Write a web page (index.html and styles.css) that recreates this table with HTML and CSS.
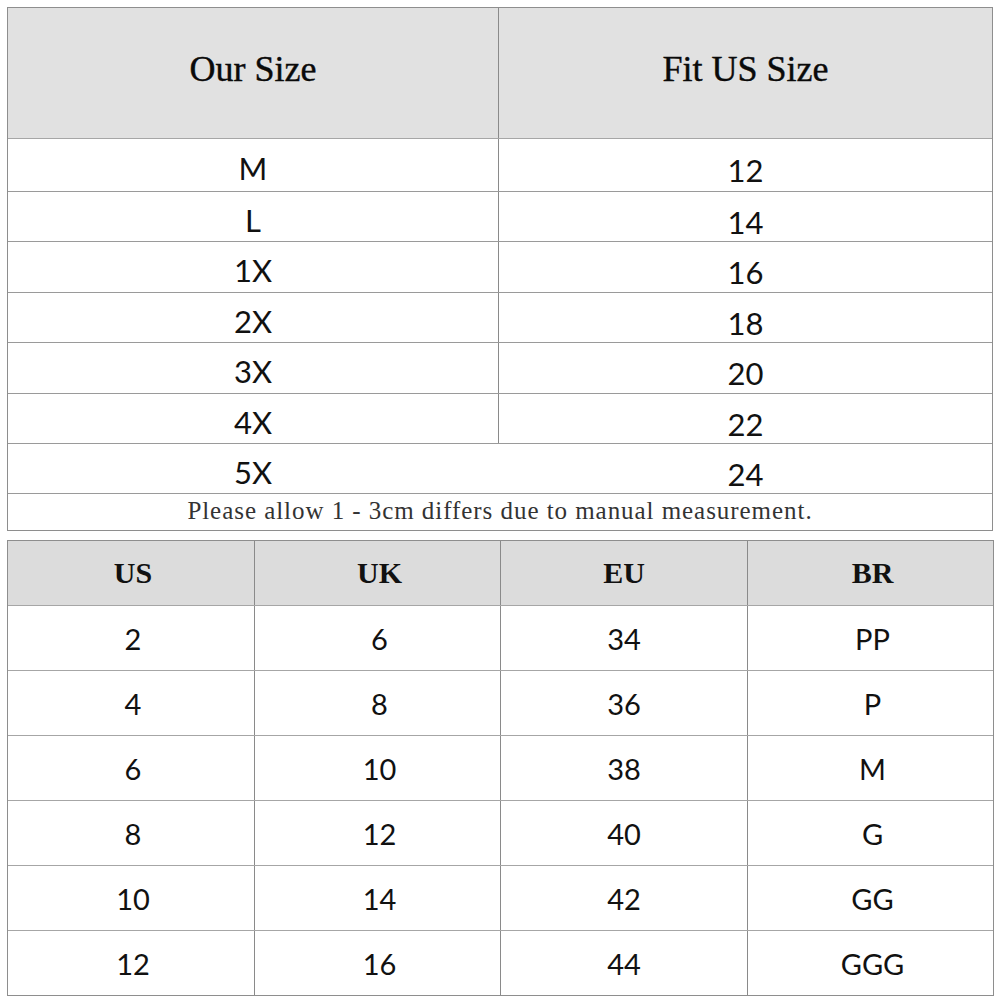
FILE: index.html
```html
<!DOCTYPE html>
<html>
<head>
<meta charset="utf-8">
<link rel="stylesheet" href="styles.css">
</head>
<body>
<div class="chart">
  <div class="fit-head">
    <div class="fh-cell">Our Size</div>
    <div class="fh-cell fh-right">Fit US Size</div>
  </div>
  <div class="fit-row r52"><div class="fc">M</div><div class="fc fc-r">12</div></div>
  <div class="fit-row r49"><div class="fc">L</div><div class="fc fc-r">14</div></div>
  <div class="fit-row r50"><div class="fc">1X</div><div class="fc fc-r">16</div></div>
  <div class="fit-row r49"><div class="fc">2X</div><div class="fc fc-r">18</div></div>
  <div class="fit-row r50"><div class="fc">3X</div><div class="fc fc-r">20</div></div>
  <div class="fit-row r49"><div class="fc">4X</div><div class="fc fc-r">22</div></div>
  <div class="fit-row r49 last"><div class="fc">5X</div><div class="fc fc-r nodiv">24</div></div>
  <div class="note">Please allow 1 - 3cm differs due to manual measurement.</div>
</div>

<div class="conv">
  <div class="cv-row cv-head">
    <div class="cv">US</div><div class="cv">UK</div><div class="cv cv-mid">EU</div><div class="cv">BR</div>
  </div>
  <div class="cv-row"><div class="cv">2</div><div class="cv">6</div><div class="cv cv-mid">34</div><div class="cv">PP</div></div>
  <div class="cv-row"><div class="cv">4</div><div class="cv">8</div><div class="cv cv-mid">36</div><div class="cv">P</div></div>
  <div class="cv-row"><div class="cv">6</div><div class="cv">10</div><div class="cv cv-mid">38</div><div class="cv">M</div></div>
  <div class="cv-row"><div class="cv">8</div><div class="cv">12</div><div class="cv cv-mid">40</div><div class="cv">G</div></div>
  <div class="cv-row"><div class="cv">10</div><div class="cv">14</div><div class="cv cv-mid">42</div><div class="cv">GG</div></div>
  <div class="cv-row cv-last"><div class="cv">12</div><div class="cv">16</div><div class="cv cv-mid">44</div><div class="cv">GGG</div></div>
</div>
</body>
</html>
```

FILE: styles.css
```css
html, body {
  margin: 0;
  padding: 0;
  background: #ffffff;
}
body {
  width: 1000px;
  height: 1000px;
  overflow: hidden;
  color: #111;
}
.chart {
  box-sizing: border-box;
  margin: 7px 0 0 7px;
  width: 986px;
  border: 1px solid #8e8e8e;
}
.fit-head {
  display: grid;
  grid-template-columns: 490px 494px;
  height: 131px;
  box-sizing: border-box;
  background: #e1e1e1;
  border-bottom: 1px solid #a6a6a6;
}
.fh-cell {
  display: flex;
  align-items: center;
  justify-content: center;
  padding-bottom: 8px;
  font-family: "Liberation Serif", "Times New Roman", serif;
  font-size: 36px;
  color: #0a0a0a;
  -webkit-text-stroke: 0.4px #0a0a0a;
}
.fh-right {
  border-left: 1px solid #8a8a8a;
}
.fit-row {
  display: grid;
  grid-template-columns: 490px 494px;
  box-sizing: border-box;
  border-bottom: 1px solid #9a9a9a;
}
.r52 { height: 53px; }
.r49 { height: 50px; }
.r50 { height: 51px; }
.fc {
  display: flex;
  align-items: center;
  justify-content: center;
  padding-top: 6px;
  font-family: "Lato", "DejaVu Sans", sans-serif;
  font-size: 31px;
  color: #111;
}
.fc-r {
  border-left: 1px solid #8a8a8a;
  padding-top: 10px;
}
.fc-r.nodiv {
  border-left-color: transparent;
}
.note {
  height: 36px;
  display: flex;
  align-items: center;
  justify-content: center;
  padding-bottom: 3px;
  box-sizing: border-box;
  font-family: "Liberation Serif", "Times New Roman", serif;
  font-size: 25px;
  letter-spacing: 0.95px;
  color: #333;
}
.conv {
  box-sizing: border-box;
  margin: 9px 0 0 7px;
  width: 987px;
  border: 1px solid #8e8e8e;
}
.cv-row {
  display: grid;
  grid-template-columns: 246px 246px 247px 246px;
  height: 65px;
  box-sizing: border-box;
  border-bottom: 1px solid #a6a6a6;
}
.cv-row.cv-last {
  height: 64px;
  border-bottom: none;
}
.cv-head {
  background: #dcdcdc;
}
.cv {
  display: flex;
  align-items: center;
  justify-content: center;
  padding-left: 4px;
  font-family: "Lato", "DejaVu Sans", sans-serif;
  font-size: 29px;
  color: #111;
}
.cv.cv-mid {
  padding-left: 0;
}
.cv + .cv {
  border-left: 1px solid #8a8a8a;
}
.cv-head .cv {
  font-family: "Liberation Serif", "Times New Roman", serif;
  font-weight: bold;
  font-size: 30px;
  color: #111;
}
```
